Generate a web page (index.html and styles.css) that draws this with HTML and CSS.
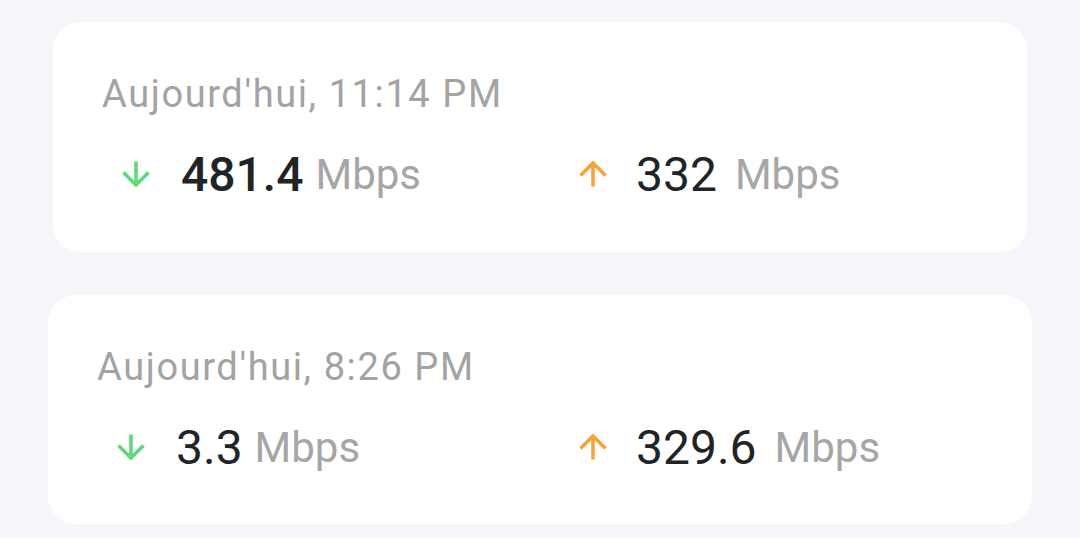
FILE: index.html
```html
<!DOCTYPE html>
<html lang="fr">
<head>
<meta charset="utf-8">
<title>Historique</title>
<link rel="stylesheet" href="styles.css">
</head>
<body>
<div class="list">
  <div class="card card-pressed">
    <div class="date">Aujourd'hui, 11:14 PM</div>
    <div class="row">
      <div class="stat stat-down">
        <svg class="arrow" viewBox="0 0 28 26" width="28" height="26"><path d="M14 0.5 V24 M1.5 11.5 L14 24 L26.5 11.5" fill="none" stroke="#5fd97a" stroke-width="3.6"/></svg>
        <span class="value value-strong">481.4</span><span class="unit">Mbps</span>
      </div>
      <div class="stat stat-up">
        <svg class="arrow" viewBox="0 0 28 26" width="28" height="26"><path d="M14 25.5 V2 M1.5 14.5 L14 2 L26.5 14.5" fill="none" stroke="#f5a33b" stroke-width="3.6"/></svg>
        <span class="value">332</span><span class="unit">Mbps</span>
      </div>
    </div>
  </div>
  <div class="card">
    <div class="date">Aujourd'hui, 8:26 PM</div>
    <div class="row">
      <div class="stat stat-down">
        <svg class="arrow" viewBox="0 0 28 26" width="28" height="26"><path d="M14 0.5 V24 M1.5 11.5 L14 24 L26.5 11.5" fill="none" stroke="#5fd97a" stroke-width="3.6"/></svg>
        <span class="value">3.3</span><span class="unit">Mbps</span>
      </div>
      <div class="stat stat-up">
        <svg class="arrow" viewBox="0 0 28 26" width="28" height="26"><path d="M14 25.5 V2 M1.5 14.5 L14 2 L26.5 14.5" fill="none" stroke="#f5a33b" stroke-width="3.6"/></svg>
        <span class="value">329.6</span><span class="unit">Mbps</span>
      </div>
    </div>
  </div>
</div>
</body>
</html>
```
FILE: styles.css
```css
html, body {
  margin: 0;
  padding: 0;
  background: #f5f6fa;
  font-family: Roboto, "Liberation Sans", sans-serif;
}
.list {
  padding-top: 22px;
  display: flex;
  flex-direction: column;
  gap: 43px;
}
.card {
  background: #ffffff;
  border-radius: 28px;
  margin: 0 48px;
  height: 229px;
  box-sizing: border-box;
  padding: 48px 15px 0 49px;
}
.card-pressed {
  margin: 0 53px;
  height: 230px;
}
.date {
  font-size: 38px;
  line-height: 48px;
  letter-spacing: 1.6px;
  color: #a3a3a3;
}
.row {
  display: grid;
  grid-template-columns: 1fr 1fr;
  margin-top: 26px;
}
.stat {
  display: flex;
  align-items: center;
  height: 60px;
}
.arrow {
  margin-left: 20px;
  margin-right: 31px;
  flex: none;
}
.stat-up .arrow {
  margin-left: 22px;
  margin-right: 29px;
}
.value {
  font-size: 48px;
  color: #212427;
}
.value-strong {
  font-weight: 500;
}
.unit {
  font-size: 42px;
  color: #a6a6a6;
  margin-left: 12px;
}
.stat-up .unit {
  margin-left: 18px;
}
```
